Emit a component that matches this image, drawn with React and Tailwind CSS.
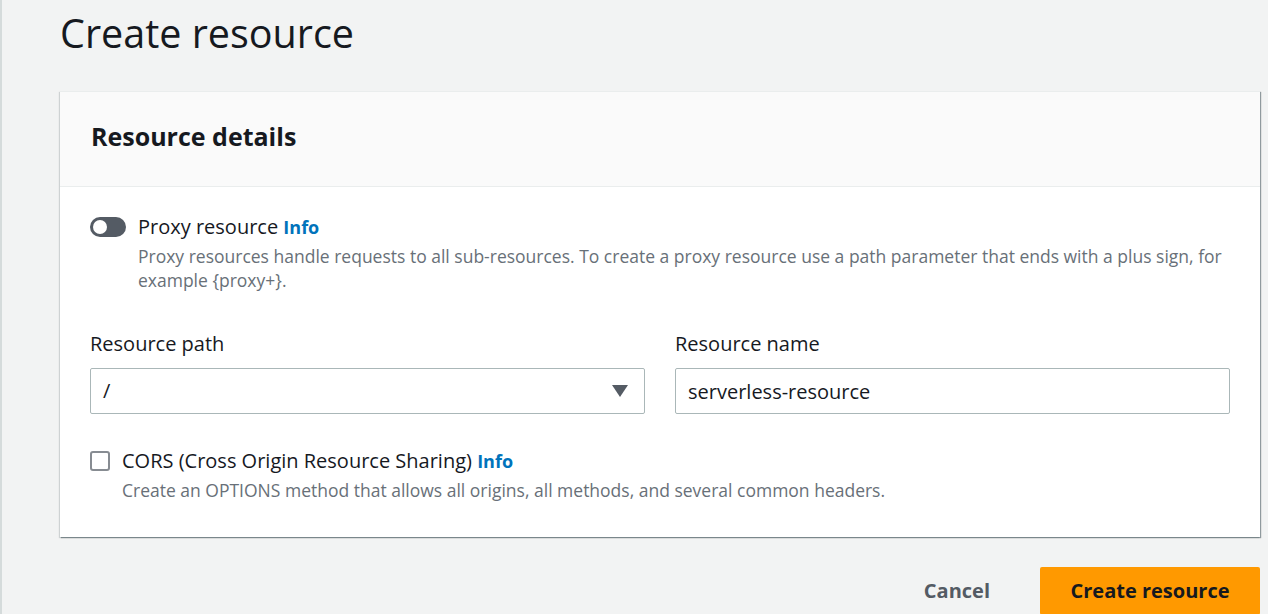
import React, { useState } from "react";

const font = { fontFamily: '"Open Sans", "Noto Sans", sans-serif' };

const CreateResource = () => {
  const [proxy, setProxy] = useState(false);
  const [cors, setCors] = useState(false);
  const [name, setName] = useState("serverless-resource");

  return (
    <div className="min-h-[614px] bg-[#f2f3f3] border-l-2 border-[#d5dbdb] text-[#16191f] overflow-hidden" style={font}>
      <div className="pl-[58px] pr-[8px]">
        {/* Page title */}
        <h1 className="text-[39.5px] leading-[48px] pt-[9px] pb-[34px] font-normal">Create resource</h1>

        {/* Card */}
        <div className="bg-white shadow-[1px_1px_1px_0_rgba(0,28,36,0.3),1px_1px_1px_0_rgba(0,28,36,0.15),-1px_1px_1px_0_rgba(0,28,36,0.15)] border-t border-[#eaeded]">
          <div className="bg-[#fafafa] border-b border-[#eaeded] h-[95px] flex items-center px-[31px] pb-[4px]">
            <h2 className="text-[25px] font-bold">Resource details</h2>
          </div>

          <div className="px-[30px] pt-[25px] pb-[35px]">
            {/* Proxy toggle */}
            <div className="flex items-start gap-[12px]">
              <button
                onClick={() => setProxy(!proxy)}
                className={`mt-[5px] w-[36px] h-[20px] shrink-0 rounded-full flex items-center px-[3px] ${proxy ? "bg-[#0073bb] justify-end" : "bg-[#545b64] justify-start"}`}
              >
                <span className="w-[14px] h-[14px] rounded-full bg-white block" />
              </button>
              <div>
                <div className="text-[20px] leading-[30px]">
                  Proxy resource <span className="text-[18px] font-bold text-[#0073bb]">Info</span>
                </div>
                <p className="mt-[2px] text-[17.5px] leading-[24px] text-[#687078]">
                  Proxy resources handle requests to all sub-resources. To create a proxy resource use a path parameter that ends with a plus sign, for example {"{proxy+}"}.
                </p>
              </div>
            </div>

            {/* Path + name */}
            <div className="grid grid-cols-2 gap-[30px] mt-[38px]">
              <div>
                <label className="block text-[20px] leading-[28px] mb-[10px]">Resource path</label>
                <div className="h-[46px] border border-[#aab7b8] rounded-[2px] flex items-center justify-between pl-[12px] pr-[16px]">
                  <span className="text-[20px]">/</span>
                  <svg width="16" height="12" viewBox="0 0 16 12">
                    <path d="M0 0 L16 0 L8 12 Z" fill="#545b64" />
                  </svg>
                </div>
              </div>
              <div>
                <label className="block text-[20px] leading-[28px] mb-[10px]">Resource name</label>
                <input
                  value={name}
                  onChange={(e) => setName(e.target.value)}
                  className="w-full h-[46px] border border-[#aab7b8] rounded-[2px] px-[12px] text-[20px] outline-none"
                />
              </div>
            </div>

            {/* CORS */}
            <div className="flex items-start gap-[12px] mt-[32px]">
              <button
                onClick={() => setCors(!cors)}
                className={`mt-[5px] w-[20px] h-[20px] shrink-0 rounded-[3px] border-2 ${cors ? "bg-[#0073bb] border-[#0073bb]" : "border-[#545b64]/70 bg-white"}`}
              />
              <div>
                <div className="text-[20px] leading-[30px]">
                  CORS (Cross Origin Resource Sharing) <span className="text-[18px] font-bold text-[#0073bb]">Info</span>
                </div>
                <p className="mt-[2px] text-[17.5px] leading-[24px] text-[#687078]">
                  Create an OPTIONS method that allows all origins, all methods, and several common headers.
                </p>
              </div>
            </div>
          </div>
        </div>

        {/* Actions */}
        <div className="flex justify-end items-center mt-[30px] gap-[50px]">
          <button className="text-[20px] font-bold text-[#545b64]">Cancel</button>
          <button className="bg-[#ff9900] text-[20px] font-bold text-[#16191f] w-[220px] h-[48px] rounded-[2px] flex items-center justify-center">
            Create resource
          </button>
        </div>
      </div>
    </div>
  );
};

export default function App() {
  return <CreateResource />;
}
